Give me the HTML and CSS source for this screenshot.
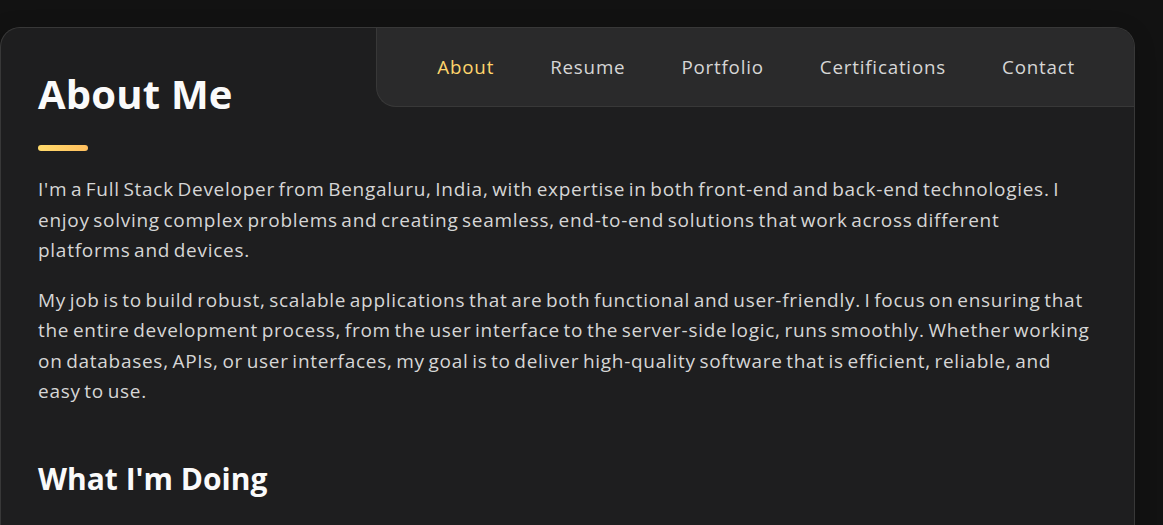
FILE: index.html
```html
<!DOCTYPE html>
<html lang="en">
<head>
<meta charset="utf-8">
<title>About Me</title>
<link rel="stylesheet" href="styles.css">
</head>
<body>
<main class="page">
  <article class="card">
    <header class="card-head">
      <div class="title-block">
        <h2 class="article-title">About Me</h2>
        <div class="title-bar"></div>
      </div>
      <nav class="navbar">
        <a class="nav-link active" href="#">About</a>
        <a class="nav-link" href="#">Resume</a>
        <a class="nav-link" href="#">Portfolio</a>
        <a class="nav-link" href="#">Certifications</a>
        <a class="nav-link" href="#">Contact</a>
      </nav>
    </header>
    <section class="about-text">
      <p>I'm a Full Stack Developer from Bengaluru, India, with expertise in both front-end and back-end technologies. I enjoy solving complex problems and creating seamless, end-to-end solutions that work across different platforms and devices.</p>
      <p>My job is to build robust, scalable applications that are both functional and user-friendly. I focus on ensuring that the entire development process, from the user interface to the server-side logic, runs smoothly. Whether working on databases, APIs, or user interfaces, my goal is to deliver high-quality software that is efficient, reliable, and easy to use.</p>
    </section>
    <section class="service">
      <h3 class="service-title">What I'm Doing</h3>
    </section>
  </article>
</main>
</body>
</html>
```

FILE: styles.css
```css
* { box-sizing: border-box; margin: 0; padding: 0; }

html, body {
  height: 100%;
  overflow: hidden;
}

body {
  background: #121212;
  font-family: "Open Sans", "DejaVu Sans", sans-serif;
  color: #d6d6d6;
}

.page {
  padding: 27px 28px 0 0;
}

.card {
  background: #1e1e1f;
  border: 1px solid #383838;
  border-bottom: none;
  border-radius: 20px 20px 0 0;
  box-shadow: -4px 8px 24px rgba(0, 0, 0, 0.25);
  min-height: 600px;
}

.card-head {
  display: flex;
  justify-content: space-between;
  align-items: flex-start;
}

.title-block {
  padding: 42px 0 0 37px;
}

.article-title {
  font-size: 40px;
  line-height: 48px;
  font-weight: 700;
  color: #fafafa;
  letter-spacing: 0.2px;
}

.title-bar {
  width: 50px;
  height: 6px;
  margin-top: 27px;
  border-radius: 4px;
  background: linear-gradient(to right, #ffda6b, #ffbf5e);
}

.navbar {
  display: flex;
  align-items: center;
  gap: 56px;
  height: 79px;
  padding: 0 59px 2px 60px;
  background: #2a2a2b;
  border-left: 1px solid #383838;
  border-bottom: 1px solid #383838;
  border-radius: 0 19px 0 20px;
}

.nav-link {
  font-size: 18.75px;
  font-weight: 500;
  letter-spacing: 0.8px;
  color: #d6d6d6;
  text-decoration: none;
}

.nav-link.active {
  color: #ffd56b;
}

.about-text {
  padding: 23px 42px 0 37px;
}

.about-text p {
  font-size: 19px;
  line-height: 30.5px;
  font-weight: 400;
  letter-spacing: 0.72px;
  word-spacing: -2px;
  color: #d6d6d6;
  margin-bottom: 19px;
}

.service {
  padding: 35px 38px 0 37px;
}

.service-title {
  font-size: 30px;
  line-height: 36px;
  font-weight: 700;
  color: #fafafa;
}
```
